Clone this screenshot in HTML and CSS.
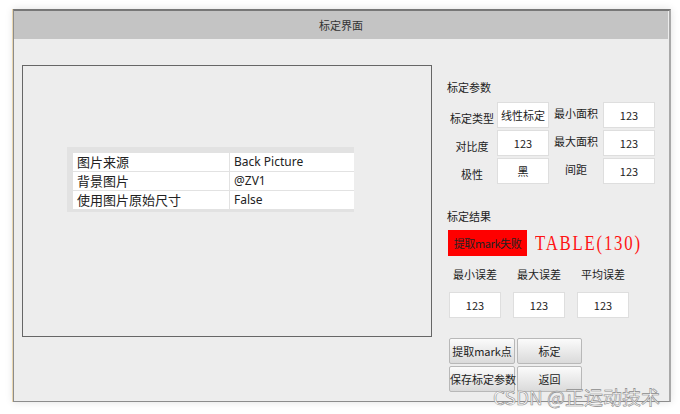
FILE: index.html
```html
<!DOCTYPE html>
<html lang="zh">
<head>
    <meta charset="UTF-8">
    <title>标定界面</title>
    <link rel="stylesheet" href="styles.css">
</head>
<body>

<div class="window">
    <div class="title-bar">标定界面</div>

    <div class="window-body">
        <!-- 图像显示区 -->
        <div class="picture-box">
            <div class="prop-grid">
                <div class="prop-row"><span class="prop-name">图片来源</span><span class="prop-value">Back Picture</span></div>
                <div class="prop-row"><span class="prop-name">背景图片</span><span class="prop-value">@ZV1</span></div>
                <div class="prop-row"><span class="prop-name">使用图片原始尺寸</span><span class="prop-value">False</span></div>
            </div>
        </div>

        <!-- 右侧参数区 -->
        <div class="side-panel">
            <div class="group-title">标定参数</div>
            <div class="param-grid">
                <span class="param-label">标定类型</span><span class="field">线性标定</span>
                <span class="param-label up">最小面积</span><span class="field">123</span>
                <span class="param-label">对比度</span><span class="field">123</span>
                <span class="param-label up">最大面积</span><span class="field">123</span>
                <span class="param-label">极性</span><span class="field">黑</span>
                <span class="param-label up">间距</span><span class="field">123</span>
            </div>

            <div class="group-title result-title">标定结果</div>
            <div class="result-row">
                <span class="status-fail">提取mark失败</span>
                <span class="result-code">TABLE(130)</span>
            </div>

            <div class="error-grid">
                <span class="error-label">最小误差</span>
                <span class="error-label">最大误差</span>
                <span class="error-label">平均误差</span>
                <span class="field">123</span>
                <span class="field">123</span>
                <span class="field">123</span>
            </div>

            <div class="button-grid">
                <button class="btn">提取mark点</button>
                <button class="btn">标定</button>
                <button class="btn">保存标定参数</button>
                <button class="btn">返回</button>
            </div>
        </div>
    </div>
</div>

<div class="watermark">CSDN @正运动技术</div>

</body>
</html>
```

FILE: styles.css
```css
body {
    margin: 0;
    background: #ffffff;
    font-family: "Noto Sans CJK SC", "Noto Sans", sans-serif;
    color: #222;
    position: relative;
    height: 414px;
    overflow: hidden;
}
.window {
    margin: 9px 0 0 13px;
    width: 658px;
    height: 393px;
    box-sizing: border-box;
    border: 1px solid #8c8c8c;
    border-top: 2px solid #777;
    border-right: 2px solid #a8a8a8;
    background: #ededed;
    box-shadow: -1px 0 0 #ead6ae, 0 0 8px rgba(0, 0, 0, 0.12);
}
.title-bar {
    height: 28px;
    background: #c4c4c4;
    font-size: 11px;
    line-height: 28px;
    text-align: center;
    color: #333;
    margin-right: 1px;
}
.window-body {
    display: flex;
    align-items: flex-start;
    padding: 26px 0 0 8px;
}
.picture-box {
    width: 410px;
    height: 272px;
    box-sizing: border-box;
    border: 1px solid #666;
    flex-shrink: 0;
}
.prop-grid {
    margin: 81px 0 0 44px;
    width: 287px;
    box-sizing: border-box;
    background: #e2e2e2;
    padding: 6px 0 2px 6px;
}
.prop-row {
    display: grid;
    grid-template-columns: 156px 1fr;
    column-gap: 1px;
    margin-bottom: 1px;
}
.prop-row span {
    background: #fff;
    height: 18px;
    line-height: 18px;
    padding-left: 4px;
}
.prop-name {
    font-size: 13px;
}
.prop-value {
    font-family: "Noto Sans", sans-serif;
    font-size: 12px;
}
.side-panel {
    margin: 15px 0 0 15px;
    width: 210px;
    font-size: 11px;
}
.group-title {
    height: 14px;
    line-height: 14px;
}
.param-grid {
    margin-top: 8px;
    display: grid;
    grid-template-columns: 50px 52px 54px 52px;
    grid-auto-rows: 26px;
    row-gap: 2px;
}
.param-label {
    text-align: center;
    line-height: 26px;
    padding-top: 3px;
}
.param-label.up {
    padding-top: 0;
    line-height: 22px;
}
.field {
    background: #fff;
    border: 1px solid #dedede;
    box-sizing: border-box;
    text-align: center;
    line-height: 24px;
    height: 26px;
}
.result-title {
    margin-top: 25px;
}
.result-row {
    margin: 7px 0 0 1px;
    display: flex;
    align-items: center;
    height: 26px;
}
.status-fail {
    width: 79px;
    height: 26px;
    line-height: 26px;
    background: #ff0000;
    text-align: center;
    white-space: nowrap;
    letter-spacing: -0.4px;
    flex-shrink: 0;
}
.result-code {
    margin-left: 8px;
    font-family: "Liberation Serif", serif;
    font-size: 21px;
    letter-spacing: 2.2px;
    color: #ff1414;
    display: inline-block;
    transform: scaleX(0.8);
    transform-origin: left center;
    white-space: nowrap;
}
.error-grid {
    margin: 11px 0 0 2px;
    display: grid;
    grid-template-columns: 52px 52px 52px;
    column-gap: 12px;
    row-gap: 11px;
}
.error-label {
    text-align: center;
    height: 14px;
    line-height: 14px;
    white-space: nowrap;
}
.button-grid {
    margin: 20px 0 0 2px;
    display: grid;
    grid-template-columns: 66px 65px;
    grid-auto-rows: 26px;
    gap: 2px;
}
.btn {
    font-family: "Noto Sans CJK SC", sans-serif;
    font-size: 11px;
    color: #222;
    padding: 0;
    background: linear-gradient(#fbfbfb, #dadada);
    border: 1px solid #b8b8b8;
    border-radius: 2px;
    white-space: nowrap;
}
.watermark {
    position: absolute;
    left: 493px;
    top: 383px;
    font-size: 19px;
    line-height: 28px;
    color: rgba(255, 255, 255, 0.9);
    -webkit-text-stroke: 0.6px #8a8a8a;
    white-space: nowrap;
}
```
